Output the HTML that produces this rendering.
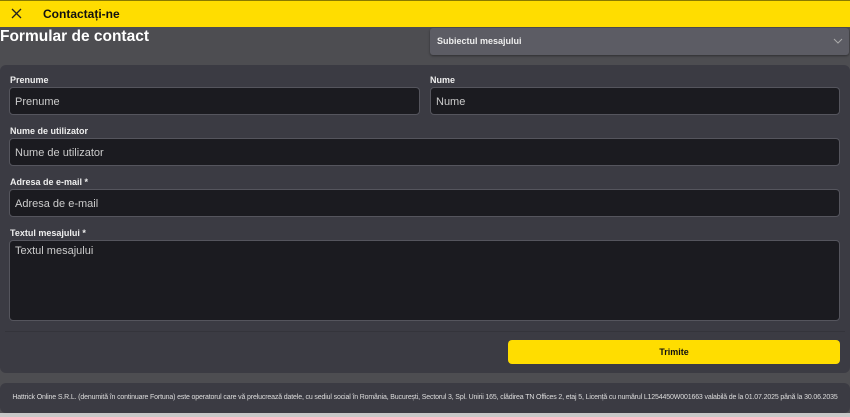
<!DOCTYPE html>
<html><head><style>
*{box-sizing:border-box;margin:0;padding:0}
body{width:850px;height:417px;background:#4d4d51;font-family:"Liberation Sans",sans-serif;position:relative;overflow:hidden;color:#fff}
.hdr{position:absolute;left:0;top:0;width:850px;height:27px;background:#ffdd00;border-top:1px solid #8a7a00}
.hdr .t{position:absolute;left:43px;top:6px;font-size:12px;font-weight:bold;color:#111}
.title{position:absolute;left:0;top:28px;font-size:15.5px;font-weight:bold;color:#fff}
.sel{position:absolute;left:430px;top:28px;width:419px;height:27px;background:#5c5c64;border-radius:3px;box-shadow:0 1px 2px rgba(0,0,0,.4)}
.sel span{position:absolute;left:7px;top:8px;font-size:9px;font-weight:bold;color:#eee}
.panel{position:absolute;left:0;top:65px;width:850px;height:308px;background:#3b3b43;border-radius:6px}
.lbl{position:absolute;font-size:9px;font-weight:bold;color:#eee}
.in{position:absolute;background:#1b1b20;border:1px solid #55555d;border-radius:4px;font-size:11px;color:#ccc;padding:8px 5px}
.btn{position:absolute;left:508px;top:340px;width:332px;height:24px;background:#ffdd00;border-radius:4px;font-size:9px;font-weight:bold;color:#111;text-align:center;line-height:24px}
.foot{position:absolute;left:0;top:383px;width:850px;height:30px;background:#3b3b43;border-radius:6px}
.foot p{position:absolute;left:0;width:850px;top:11px;text-align:center;font-size:7px;color:#ddd;letter-spacing:-0.15px;white-space:nowrap}
.bot{position:absolute;left:0;top:413px;width:850px;height:4px;background:#c8c8c8}
</style></head><body>
<div class="hdr">
<svg style="position:absolute;left:11px;top:7px" width="11" height="11" viewBox="0 0 11 11"><path d="M1 1L10 10M10 1L1 10" stroke="#222" stroke-width="1.3"/></svg>
<div class="t">Contactați-ne</div></div>
<div class="title">Formular de contact</div>
<div class="sel"><span>Subiectul mesajului</span>
<svg style="position:absolute;right:6px;top:10px" width="10" height="6" viewBox="0 0 10 6"><path d="M1 1L5 5L9 1" stroke="#aaa" fill="none" stroke-width="1"/></svg></div>
<div class="panel"></div>
<div class="lbl" style="left:10px;top:75px">Prenume</div>
<div class="lbl" style="left:430px;top:75px">Nume</div>
<div class="in" style="left:9px;top:87px;width:411px;height:28px">Prenume</div>
<div class="in" style="left:430px;top:87px;width:410px;height:28px">Nume</div>
<div class="lbl" style="left:10px;top:126px">Nume de utilizator</div>
<div class="in" style="left:9px;top:138px;width:831px;height:28px">Nume de utilizator</div>
<div class="lbl" style="left:10px;top:177px">Adresa de e-mail *</div>
<div class="in" style="left:9px;top:189px;width:831px;height:28px">Adresa de e-mail</div>
<div class="lbl" style="left:10px;top:228px">Textul mesajului *</div>
<div class="in" style="left:9px;top:240px;width:831px;height:81px;padding-top:4px">Textul mesajului</div>
<div style="position:absolute;left:5px;top:331px;width:840px;height:1px;background:#34343b"></div>
<div class="btn">Trimite</div>
<div class="foot"><p>Hattrick Online S.R.L. (denumită în continuare Fortuna) este operatorul care vă prelucrează datele, cu sediul social în România, București, Sectorul 3, Spl. Unirii 165, clădirea TN Offices 2, etaj 5, Licență cu numărul L1254450W001663 valabilă de la 01.07.2025 până la 30.06.2035</p></div>
<div class="bot"></div>
</body></html>
